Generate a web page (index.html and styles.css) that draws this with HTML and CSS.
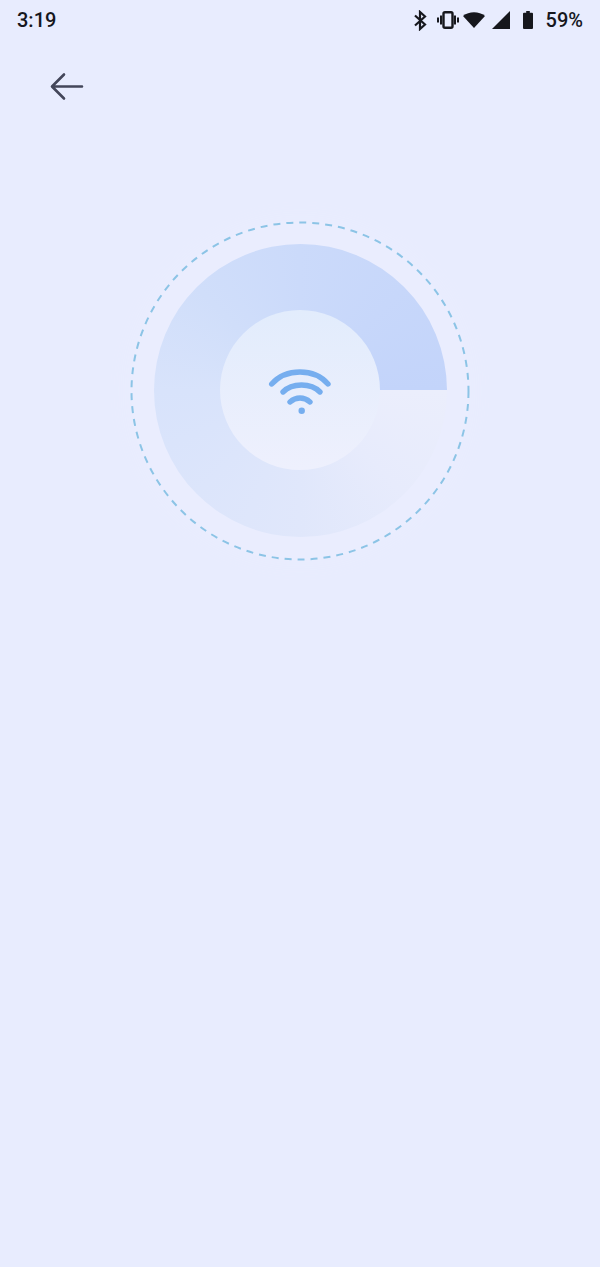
FILE: index.html
```html
<!DOCTYPE html>
<html lang="en">
<head>
    <meta charset="UTF-8">
    <meta name="viewport" content="width=device-width, initial-scale=1.0">
    <title>Scanning</title>
    <link rel="stylesheet" href="styles.css">
</head>
<body>
    <div class="status-bar">
        <span class="time">3:19</span>
        <div class="status-icons">
            <svg class="icon-bt" width="13" height="21" viewBox="0 0 13 21"><path d="M1 5.500 L11 14.500 L6 19 V2 L11 6.500 L1 15.500" fill="none" stroke="#16171d" stroke-width="2.200"/></svg>
            <svg class="icon-vibrate" width="22" height="18" viewBox="0 0 22 18"><rect x="6.500" y="1.300" width="9" height="15.400" rx="1.500" fill="none" stroke="#16171d" stroke-width="2.400"/><path d="M3 4.500h2.200v9h-2.200zM16.800 4.500h2.200v9h-2.200zM0 6.500h2v5h-2zM20 6.500h2v5h-2z" fill="#16171d"/></svg>
            <svg class="icon-wifi" width="22" height="16" viewBox="0 0 22 16"><path d="M0 4 C6 -1 16 -1 22 4 L11 16 Z" fill="#16171d"/></svg>
            <svg class="icon-signal" width="18" height="18" viewBox="0 0 18 18"><path d="M0 18 L18 0 V18 Z" fill="#16171d"/></svg>
            <svg class="icon-battery" width="10" height="18" viewBox="0 0 10 18"><path d="M3.200 0h3.600v1.800h2.200a1 1 0 0 1 1 1v14.200a1 1 0 0 1-1 1h-8a1 1 0 0 1-1-1v-14.200a1 1 0 0 1 1-1h2.200z" fill="#16171d"/></svg>
            <span class="battery-level">59%</span>
        </div>
    </div>

    <div class="toolbar">
        <button class="back-btn" aria-label="Back">
            <svg width="34" height="30" viewBox="0 0 34 30"><path d="M32 15.500H2.500M14 3.500 2 15.500 14 27.500" fill="none" stroke="#43465a" stroke-width="2.600" stroke-linecap="round" stroke-linejoin="round"/></svg>
        </button>
    </div>

    <div class="scan-area">
        <div class="scan">
            <svg class="dash-ring" width="340" height="340" viewBox="0 0 340 340"><circle cx="170" cy="170" r="168.500" fill="none" stroke="#8cc4e6" stroke-width="2" stroke-dasharray="7 6"/></svg>
            <div class="wheel">
                <div class="hub">
                    <svg class="wifi" width="66" height="46" viewBox="0 0 66 46"><g fill="none" stroke="#76aeef" stroke-width="5.400" stroke-linecap="round"><path d="M4.700 16 C19 0 47 0 61 16"/><path d="M16 24 C25 14.700 44 14.700 53 24"/><path d="M23 34 C29 28.700 37 28.700 43 34"/></g><circle cx="34.700" cy="42.700" r="3.200" fill="#76aeef"/></svg>
                </div>
            </div>
        </div>
    </div>
</body>
</html>
```

FILE: styles.css
```css
body {
    font-family: Roboto, "Liberation Sans", sans-serif;
    margin: 0;
    height: 1267px;
    overflow: hidden;
    background-color: #e8ecfe;
    color: #16171d;
}

.status-bar {
    display: flex;
    justify-content: space-between;
    align-items: center;
    height: 40px;
    padding: 0 17px;
    font-size: 20px;
    font-weight: 500;
}

.status-icons {
    display: flex;
    align-items: center;
}

.icon-vibrate {
    margin-left: 10px;
}

.icon-wifi {
    margin-left: 4px;
}

.icon-signal {
    margin-left: 7px;
}

.icon-battery {
    margin-left: 13px;
}

.battery-level {
    margin-left: 13px;
}

.toolbar {
    height: 94px;
    padding: 31px 0 0 50px;
    box-sizing: border-box;
}

.back-btn {
    display: block;
    background: none;
    border: none;
    padding: 0;
    height: 30px;
    cursor: pointer;
}

.scan-area {
    display: flex;
    justify-content: center;
    padding-top: 87px;
}

.scan {
    position: relative;
    display: flex;
    justify-content: center;
    align-items: center;
    width: 340px;
    height: 340px;
    border-radius: 50%;
    background-color: #eaedfe;
    box-shadow: 0 0 30px #eaedfe;
}

.dash-ring {
    position: absolute;
    top: 0;
    left: 0;
}

.wheel {
    display: flex;
    justify-content: center;
    align-items: center;
    width: 293px;
    height: 293px;
    margin: 0 0 1px 1px;
    border-radius: 50%;
    background: conic-gradient(from 90deg, #ebeefc 0deg, #e7ebfc 45deg, #e0e7fb 90deg, #dce5fb 135deg, #d8e3fb 180deg, #d0defa 225deg, #cbdafa 270deg, #c3d4fa 360deg);
}

.hub {
    display: flex;
    justify-content: center;
    align-items: center;
    width: 160px;
    height: 160px;
    margin: 0 1px 1px 0;
    border-radius: 50%;
    background: linear-gradient(#e2ecfc, #eef0fd);
}

.wifi {
    margin-top: 2px;
}
```
